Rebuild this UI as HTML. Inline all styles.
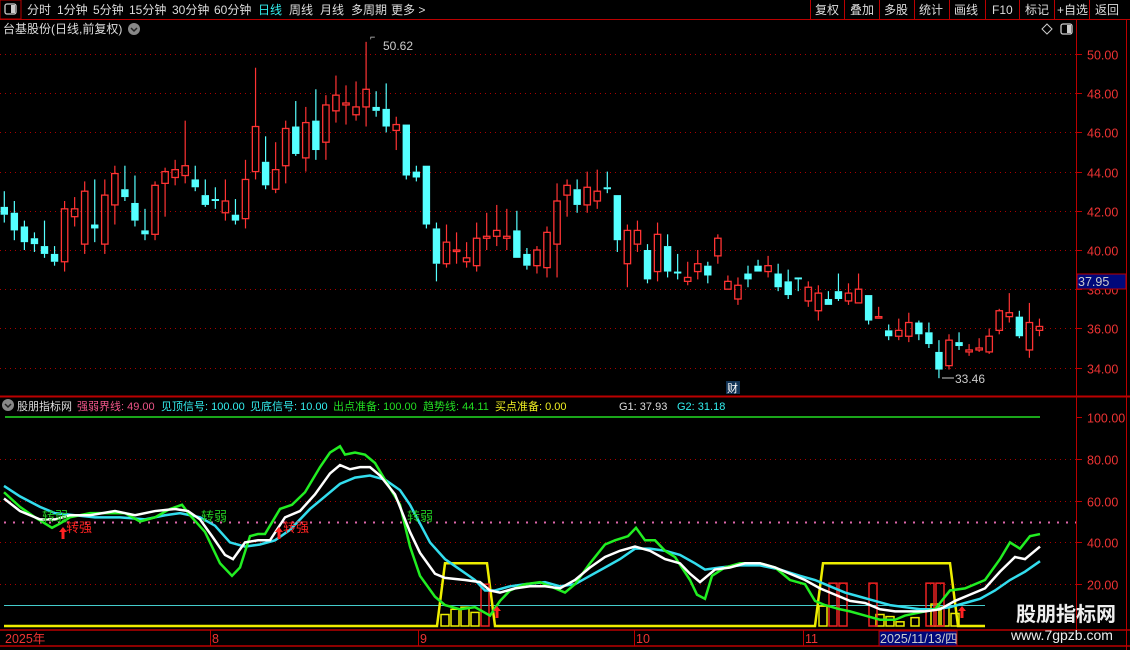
<!DOCTYPE html>
<html><head><meta charset="utf-8"><style>
body{margin:0;background:#000;width:1130px;height:650px;overflow:hidden;font-family:"Liberation Sans","Noto Sans CJK SC",sans-serif;}
svg{position:absolute;left:0;top:0}
</style></head><body>
<svg id="s" width="1130" height="650" xmlns="http://www.w3.org/2000/svg" font-family="Liberation Sans, Noto Sans CJK SC, sans-serif">
<rect width="1130" height="650" fill="#000"/>
<line x1="0" y1="19.5" x2="1130" y2="19.5" stroke="#b00" />
<rect x="0" y="0" width="21" height="19" fill="none" stroke="#b00"/>
<rect x="5" y="4" width="11" height="10" rx="2" fill="none" stroke="#ccc" stroke-width="1.3"/><rect x="11" y="5" width="4" height="8" fill="#ccc"/>
<g font-size="12" fill="#ddd">
<text x="27" y="14">分时</text><text x="57" y="14">1分钟</text><text x="93" y="14">5分钟</text><text x="129" y="14">15分钟</text><text x="172" y="14">30分钟</text><text x="214" y="14">60分钟</text>
<text x="258" y="14" fill="#3ee">日线</text><text x="289" y="14">周线</text><text x="320" y="14">月线</text><text x="351" y="14">多周期</text><text x="391" y="14">更多 &gt;</text>
<text x="815" y="14">复权</text><text x="850" y="14">叠加</text><text x="884" y="14">多股</text><text x="919" y="14">统计</text><text x="954" y="14">画线</text><text x="992" y="14">F10</text><text x="1025" y="14">标记</text><text x="1057" y="14">+自选</text><text x="1095" y="14">返回</text>
</g>
<g stroke="#b00"><line x1="810.5" y1="0" x2="810.5" y2="19"/><line x1="844.5" y1="0" x2="844.5" y2="19"/><line x1="879.5" y1="0" x2="879.5" y2="19"/><line x1="914.5" y1="0" x2="914.5" y2="19"/><line x1="949.5" y1="0" x2="949.5" y2="19"/><line x1="985.5" y1="0" x2="985.5" y2="19"/><line x1="1019.5" y1="0" x2="1019.5" y2="19"/><line x1="1054.5" y1="0" x2="1054.5" y2="19"/><line x1="1089.5" y1="0" x2="1089.5" y2="19"/></g>
<text x="3" y="33" font-size="12" fill="#ddd">台基股份(日线,前复权)</text>
<circle cx="134" cy="29" r="6" fill="#888"/><path d="M131 28l3 3 3-3" stroke="#222" fill="none" stroke-width="1.5"/>
<path d="M1047 24l5 5-5 5-5-5z" fill="none" stroke="#ccc"/>
<rect x="1061" y="24" width="11" height="10" rx="2" fill="none" stroke="#ccc" stroke-width="1.3"/><rect x="1067" y="25" width="4" height="8" fill="#ccc"/>
<line x1="1076.5" y1="20" x2="1076.5" y2="630" stroke="#b00"/>
<line x1="1126.5" y1="20" x2="1126.5" y2="650" stroke="#b00"/>
<line x1="0" y1="396.5" x2="1130" y2="396.5" stroke="#b00" stroke-width="2"/>
<g id="grid"></g>
<g id="cand"></g>
<text x="370" y="40" font-size="9" fill="#ccc">⌐</text>
<text x="383" y="50" font-size="12" fill="#ccc">50.62</text>
<text x="955" y="383" font-size="12" fill="#ccc">33.46</text>
<line x1="942" y1="378" x2="954" y2="378" stroke="#ccc"/>
<rect x="726" y="381" width="14" height="13" fill="#135"/><text x="727" y="392" font-size="11" fill="#fff">财</text>
<rect x="1077" y="274" width="49" height="15" fill="#00087a" stroke="#b00"/><text x="1078" y="286" font-size="12.5" fill="#ccc">37.95</text>
<circle cx="8" cy="405" r="6" fill="#888"/><path d="M5 404l3 3 3-3" stroke="#222" fill="none" stroke-width="1.5"/>
<g font-size="11"><text x="17" y="410" fill="#ddd">股朋指标网</text><text x="77" y="410" fill="#e58">强弱界线: 49.00</text><text x="161" y="410" fill="#3ee">见顶信号: 100.00</text><text x="250" y="410" fill="#3ee">见底信号: 10.00</text><text x="333" y="410" fill="#2d2">出点准备: 100.00</text><text x="423" y="410" fill="#2d2">趋势线: 44.11</text><text x="495" y="410" fill="#ee2">买点准备: 0.00</text><text x="619" y="410" fill="#ddd">G1: 37.93</text><text x="677" y="410" fill="#3ee">G2: 31.18</text></g>
<g id="ind"></g>
<line x1="0" y1="630" x2="1130" y2="630" stroke="#b00" stroke-width="1.5"/>
<line x1="0" y1="646" x2="1130" y2="646" stroke="#b00" stroke-width="1.5"/>
<g stroke="#b00"><line x1="210.5" y1="630" x2="210.5" y2="646"/><line x1="418.5" y1="630" x2="418.5" y2="646"/><line x1="634.5" y1="630" x2="634.5" y2="646"/><line x1="803.5" y1="630" x2="803.5" y2="646"/></g>
<g font-size="12.5" fill="#e33"><text x="5" y="643">2025年</text><text x="212" y="643">8</text><text x="420" y="643">9</text><text x="636" y="643">10</text><text x="805" y="643">11</text></g>
<rect x="879" y="631" width="78" height="15" fill="#00087a" stroke="#b00"/><text x="880" y="643" font-size="12.5" fill="#ccc">2025/11/13/四</text>
<text x="1016" y="621" font-size="20" font-weight="bold" fill="#eee">股朋指标网</text>
<text x="1011" y="640" font-size="14" fill="#eee">www.7gpzb.com</text>
</svg>
<script>
var NS="http://www.w3.org/2000/svg";
function el(p,t,a){var e=document.createElementNS(NS,t);for(var k in a)e.setAttribute(k,a[k]);document.getElementById(p).appendChild(e);return e;}
function py(p){return 54+(50-p)*19.6;}
function iy(v){return 626-v*2.09;}
[50,48,46,44,42,40,38,36,34].forEach(function(p){var y=Math.round(py(p))+.5;el('grid','line',{x1:0,x2:1076,y1:y,y2:y,stroke:'#a00','stroke-dasharray':'1 4'});el('grid','line',{x1:1076,x2:1082,y1:y,y2:y,stroke:'#b00'});var t=el('grid','text',{x:1087,y:y+5,'font-size':12.5,fill:'#e33'});t.textContent=p.toFixed(2);});
[80,60,40,20].forEach(function(v){var y=Math.round(iy(v))+.5;el('grid','line',{x1:0,x2:1076,y1:y,y2:y,stroke:'#a00','stroke-dasharray':'1 4'});});
[100,80,60,40,20].forEach(function(v){var y=Math.round(iy(v))+.5;el('grid','line',{x1:1076,x2:1082,y1:y,y2:y,stroke:'#b00'});var t=el('grid','text',{x:1087,y:y+5,'font-size':12.5,fill:'#e33'});t.textContent=v.toFixed(2);});
var C=[[42.2,41.8,43,41.4],[41.9,41,42.5,40.5],[41.2,40.4,41.5,40],[40.6,40.3,40.9,39.9],[40.2,39.8,41.5,39.6],[39.8,39.4,40.2,39.2],[39.4,42.1,42.5,38.9],[41.7,42.1,42.7,41.2],[40.3,43,43.5,39.8],[41.3,41.1,43.6,40.4],[40.3,42.8,43.6,39.8],[42.3,43.9,44.3,41.3],[43.1,42.7,44.3,42.5],[42.4,41.5,43.8,41.2],[41,40.8,42.1,40.5],[40.8,43.3,43.5,40.5],[43.4,44,44.2,41.7],[43.7,44.1,44.6,43.3],[43.8,44.3,46.6,43.4],[43.6,43.2,44.3,43],[42.8,42.3,43.6,42.2],[42.6,42.5,43.2,42.1],[41.9,42.5,43.6,41.5],[41.8,41.5,42.6,41.3],[41.6,43.6,44.6,41.1],[44,46.3,49.3,43.6],[44.5,43.3,45.8,43.1],[43.1,44.1,45.5,42.9],[44.3,46.2,46.6,43.4],[46.3,44.9,47.6,44.8],[44.7,46.5,47.3,44],[46.6,45.1,48.2,44.6],[45.5,47.4,47.9,44.6],[47.1,47.9,48.9,46.5],[47.4,47.5,48.4,46.4],[46.9,47.3,48.6,46.6],[47.3,48.2,50.62,46.3],[47.3,47.1,48.1,46.8],[47.2,46.3,48.5,46],[46.1,46.4,46.8,45.1],[46.4,43.8,46.4,43.6],[44,43.7,44.3,43.5],[44.3,41.3,44.3,41.1],[41.1,39.3,41.4,38.4],[39.3,40.4,41.3,39.1],[40,40,40.9,39.3],[39.4,39.6,40.4,39.1],[39.2,40.6,41.4,38.9],[40.6,40.7,41.9,40],[40.7,41,42.3,40.2],[40.6,40.7,42.1,40],[41,39.6,42,39.6],[39.8,39.2,40.1,39],[39.2,40,40.2,38.8],[39.1,40.9,41.2,38.6],[40.3,42.5,43.4,38.6],[42.8,43.3,43.6,41.7],[43.1,42.3,43.6,41.9],[42.3,43.2,44,41.9],[42.5,43,44.1,42.1],[43.2,43.1,44,42.9],[42.8,40.5,42.8,39.9],[39.3,41,41.3,38.1],[40.3,41,41.5,39.9],[40,38.5,40.3,38.3],[38.9,40.8,41.4,38.4],[40.2,38.9,40.8,38.6],[38.9,38.8,39.8,38.5],[38.4,38.6,39.4,38.2],[38.9,39.3,40,38.5],[39.2,38.7,39.4,38.3],[39.7,40.6,40.8,39.3],[38,38.4,38.7,38],[37.5,38.2,38.6,37.2],[38.8,38.5,39.2,38.1],[39.2,38.9,39.5,38.9],[38.9,39.2,39.7,38.6],[38.8,38.1,39.3,37.9],[38.4,37.7,39,37.5],[38.6,38.5,38.6,37.9],[37.4,38.1,38.4,37.1],[36.9,37.8,38.2,36.4],[37.5,37.2,37.9,37.2],[37.9,37.5,38.8,37.4],[37.4,37.8,38.3,37.2],[37.3,38,38.8,37.3],[37.7,36.4,37.7,36.2],[36.6,36.6,37.1,36.5],[35.9,35.6,36.2,35.4],[35.6,35.9,36.5,35.4],[35.6,36.3,36.8,35.3],[36.3,35.7,36.4,35.4],[35.8,35.2,36.3,35],[34.8,33.9,35.4,33.46],[34.1,35.4,35.7,33.9],[35.3,35.1,35.8,34.9],[34.8,34.9,35.2,34.6],[34.9,35,35.5,34.8],[34.8,35.6,36,34.7],[35.9,36.9,37,35.7],[36.6,36.8,37.8,36.3],[36.6,35.6,36.9,35.5],[34.9,36.3,37.3,34.5],[35.9,36.1,36.5,35.6]];
C.forEach(function(d,i){var x=4.3+i*10.05;var o=d[0],c=d[1],h=d[2],l=d[3];var up=c>=o;var col=up?'#f33':'#5ff';var t=py(Math.max(o,c)),b=py(Math.min(o,c));if(b-t<1.5)b=t+1.5;
el('cand','line',{x1:x,x2:x,y1:py(h),y2:t,stroke:col,'stroke-width':1.2});el('cand','line',{x1:x,x2:x,y1:b,y2:py(l),stroke:col,'stroke-width':1.2});
if(up)el('cand','rect',{x:x-3.2,y:t,width:6.4,height:b-t,fill:'none',stroke:col,'stroke-width':1.3});else el('cand','rect',{x:x-3.7,y:t,width:7.4,height:b-t,fill:col});});
function pl(pts,col,w){var s=pts.map(function(p){return p[0]+','+iy(p[1]);}).join(' ');el('ind','polyline',{points:s,fill:'none',stroke:col,'stroke-width':w||2});}
el('ind','line',{x1:5,x2:1040,y1:417,y2:417,stroke:'#2d2','stroke-width':1.5});
el('ind','line',{x1:4,x2:1076,y1:522.5,y2:522.5,stroke:'#d6a','stroke-dasharray':'2 7','stroke-width':2});
el('ind','line',{x1:4,x2:985,y1:605.5,y2:605.5,stroke:'#4cc','stroke-width':1});
pl([[4,0],[437,0],[445,30],[487,30],[495,0],[815,0],[823,30],[950,30],[958,0],[985,0]],'#ee0',2.5);
[[445,5.5],[455,8],[465,9],[475,6.5]].forEach(function(b){el('ind','rect',{x:b[0]-4,y:iy(b[1]),width:8,height:b[1]*2.09,fill:'none',stroke:'#ee0','stroke-width':1.5});});
[[485,20]].forEach(function(b){el('ind','rect',{x:b[0]-4,y:iy(b[1]),width:8,height:b[1]*2.09,fill:'none',stroke:'#e22','stroke-width':1.5});});
[[823,9.5],[880,5.5],[890,4.5],[900,2],[915,4],[935,10.5],[945,9],[955,6]].forEach(function(b){el('ind','rect',{x:b[0]-4,y:iy(b[1]),width:8,height:b[1]*2.09,fill:'none',stroke:'#ee0','stroke-width':1.5});});
[[833,20.5],[843,20.5],[873,20.5],[930,20.5],[940,20.5]].forEach(function(b){el('ind','rect',{x:b[0]-4,y:iy(b[1]),width:8,height:b[1]*2.09,fill:'none',stroke:'#e22','stroke-width':1.5});});
var G=[[4,64],[20,57],[35,52],[52,47],[60,49],[70,52],[90,54],[110,54],[125,54],[140,50],[155,52],[170,56],[182,58],[190,53],[205,45],[220,30],[232,24],[240,28],[250,43],[258,44],[265,44],[280,56],[292,58],[305,64],[320,76],[330,83],[340,86],[345,82],[355,83],[365,82],[375,78],[390,66],[400,58],[410,38],[420,24],[435,14],[445,10],[460,8],[475,9],[490,5],[500,12],[510,17],[525,20],[540,21],[555,18],[565,16],[575,20],[590,30],[605,39],[615,41],[628,43],[636,47],[645,41],[655,41],[665,36],[675,33],[690,22],[697,15],[705,13],[712,24],[725,28],[740,30],[760,30],[775,28],[790,22],[805,20],[815,12],[825,10],[840,8],[850,7],[865,5],[880,3],[895,3],[905,5],[915,6],[925,7],[935,8],[950,17],[965,18],[985,22],[1000,32],[1010,40],[1020,37],[1030,43],[1040,44]];
var W=[[4,61],[20,55],[40,51],[55,51],[70,53],[90,53],[115,55],[135,53],[155,55],[175,56],[188,55],[200,51],[212,43],[225,34],[233,32],[245,40],[258,41],[270,41],[285,52],[300,55],[315,63],[330,73],[340,77],[350,75],[360,76],[370,76],[380,72],[395,63],[410,45],[420,35],[435,25],[445,23],[465,22],[480,21],[490,17],[500,16],[515,18],[530,19],[545,19],[560,18],[575,22],[590,28],[605,33],[620,36],[635,38],[650,36],[665,32],[680,30],[690,25],[700,21],[715,27],[730,28],[745,30],[760,30],[775,28],[790,25],[805,22],[820,18],[835,15],[850,12],[865,11],[880,8],[895,7],[910,7],[925,7],[940,8],[955,12],[970,15],[985,18],[1000,26],[1015,33],[1025,32],[1040,38]];
var Y=[[4,67],[20,62],[40,57],[55,54],[75,53],[95,52],[120,52],[145,51],[165,53],[180,54],[200,52],[215,48],[230,40],[245,38],[260,39],[275,41],[290,46],[310,56],[325,62],[340,68],[355,71],[370,72],[385,70],[400,65],[410,58],[420,49],[430,40],[445,32],[460,27],[475,22],[485,17],[495,17],[510,19],[525,20],[545,21],[560,19],[575,20],[590,24],[605,28],[620,32],[635,37],[650,37],[665,36],[680,34],[695,30],[705,27],[720,28],[740,29],[760,29],[780,27],[800,24],[815,22],[830,19],[845,16],[860,14],[875,12],[890,10],[905,9],[920,8],[935,8],[950,9],[965,11],[980,13],[995,17],[1010,22],[1025,26],[1040,31]];
pl(Y,'#3de',2.5);pl(G,'#2e2',2.5);pl(W,'#fff',2.5);
function tx(x,y,s,c){var t=el('ind','text',{x:x,y:y,'font-size':13,fill:c});t.textContent=s;}
tx(42,521,'转弱','#2c2');tx(201,521,'转弱','#2c2');tx(407,521,'转弱','#2c2');
tx(66,532,'转强','#f22');tx(283,532,'转强','#f22');
[[63,527],[279,527],[497,606],[962,606]].forEach(function(a){el('ind','path',{d:'M'+a[0]+' '+a[1]+'l-4 5h2.5v7h3v-7h2.5z',fill:'#f22'});});
</script>
</body></html>
